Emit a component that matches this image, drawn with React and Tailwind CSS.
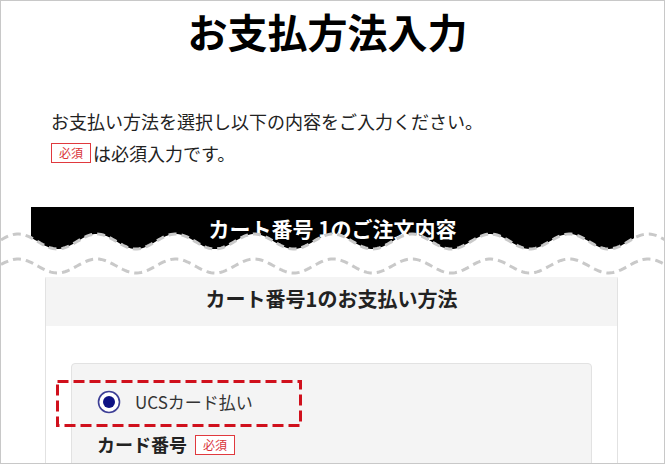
import React from 'react';

const FONT = { fontFamily: '"Noto Sans CJK JP", "Noto Sans", sans-serif' };

// torn-edge wave, crest at x=17, period ~78.75
function wavePath(cy, amp) {
  const P = 78.75;
  const X0 = 17;
  let d = '';
  for (let x = 0; x <= 666; x += 2) {
    const y = cy - amp * Math.cos((2 * Math.PI * (x - X0)) / P);
    d += (x === 0 ? 'M' : 'L') + x + ' ' + y.toFixed(2) + ' ';
  }
  return d;
}

const TOP_WAVE = wavePath(16.5, 7.5);
const BOTTOM_WAVE = wavePath(41, 7);

function Badge({ className = '' }) {
  return (
    <span className={`inline-flex items-center justify-center w-[40px] h-[20px] border-[1.5px] border-[#e0393e] bg-white text-[12px] leading-none text-[#d9343a] ${className}`}>
      必須
    </span>
  );
}

function Radio() {
  return (
    <svg width="24" height="24" viewBox="0 0 24 24">
      <circle cx="12" cy="12" r="10.5" fill="#fff" stroke="#3d3f96" strokeWidth="1.6" />
      <circle cx="12" cy="12" r="6" fill="#0e1284" />
    </svg>
  );
}

export default function App() {
  return (
    <div style={FONT} className="relative w-[665px] h-[464px] overflow-hidden border border-[#c8c8c8] bg-white text-[#222]">
      {/* upper capture */}
      <h1 className="mt-[10px] text-center text-[40px] leading-[40px] font-bold text-black pr-[10px]">お支払方法入力</h1>

      <div className="mt-[54px] pl-[50px] text-[18px] leading-[32px]">
        <p>お支払い方法を選択し以下の内容をご入力ください。</p>
        <p className="flex items-center">
          <Badge className="mr-[2px]" />
          は必須入力です。
        </p>
      </div>

      <div className="mt-[38px] mx-[30px] h-[46px] bg-black flex items-center justify-center">
        <span className="text-white text-[21px] font-bold -mt-[2px]">カート番号 1のご注文内容</span>
      </div>

      <div className="h-[22px]" />

      {/* lower capture */}
      <div className="ml-[44px] w-[573px] border border-[#e2e2e2] rounded-t-[4px] bg-white">
        <div className="h-[50px] bg-[#f4f4f4] flex items-center justify-center">
          <span className="text-[20px] font-bold text-[#222] -mt-[4px]">カート番号1のお支払い方法</span>
        </div>
        <div className="pt-[37px] px-[25px]">
          <div className="h-[140px] rounded-[4px] border border-[#e2e2e2] bg-[#f4f4f4] pt-[26px] pl-[25px]">
            <div className="flex items-center gap-[14px] h-[24px]">
              <Radio />
              <span className="text-[17px] text-[#333]">UCSカード払い</span>
            </div>
            <div className="mt-[17px] flex items-center gap-[8px]">
              <span className="text-[18px] font-bold text-[#222]">カード番号</span>
              <Badge />
            </div>
          </div>
        </div>
      </div>

      {/* wavy cut between the two captures */}
      <svg className="absolute left-0 top-[224px]" width="665" height="52" viewBox="0 0 665 52">
        <path d={TOP_WAVE + 'L666 52 L0 52 Z'} fill="#fff" />
        <path d={TOP_WAVE} fill="none" stroke="#c9c9c9" strokeWidth="3" strokeDasharray="8 5" />
        <path d={BOTTOM_WAVE} fill="none" stroke="#c9c9c9" strokeWidth="3" strokeDasharray="8 5" />
      </svg>

      {/* red dashed annotation */}
      <svg className="absolute left-[55px] top-[379px]" width="246" height="47" viewBox="0 0 246 47">
        <rect x="1.5" y="1.5" width="243" height="44" fill="none" stroke="#d0101c" strokeWidth="3" strokeDasharray="11 5" />
      </svg>
    </div>
  );
}
